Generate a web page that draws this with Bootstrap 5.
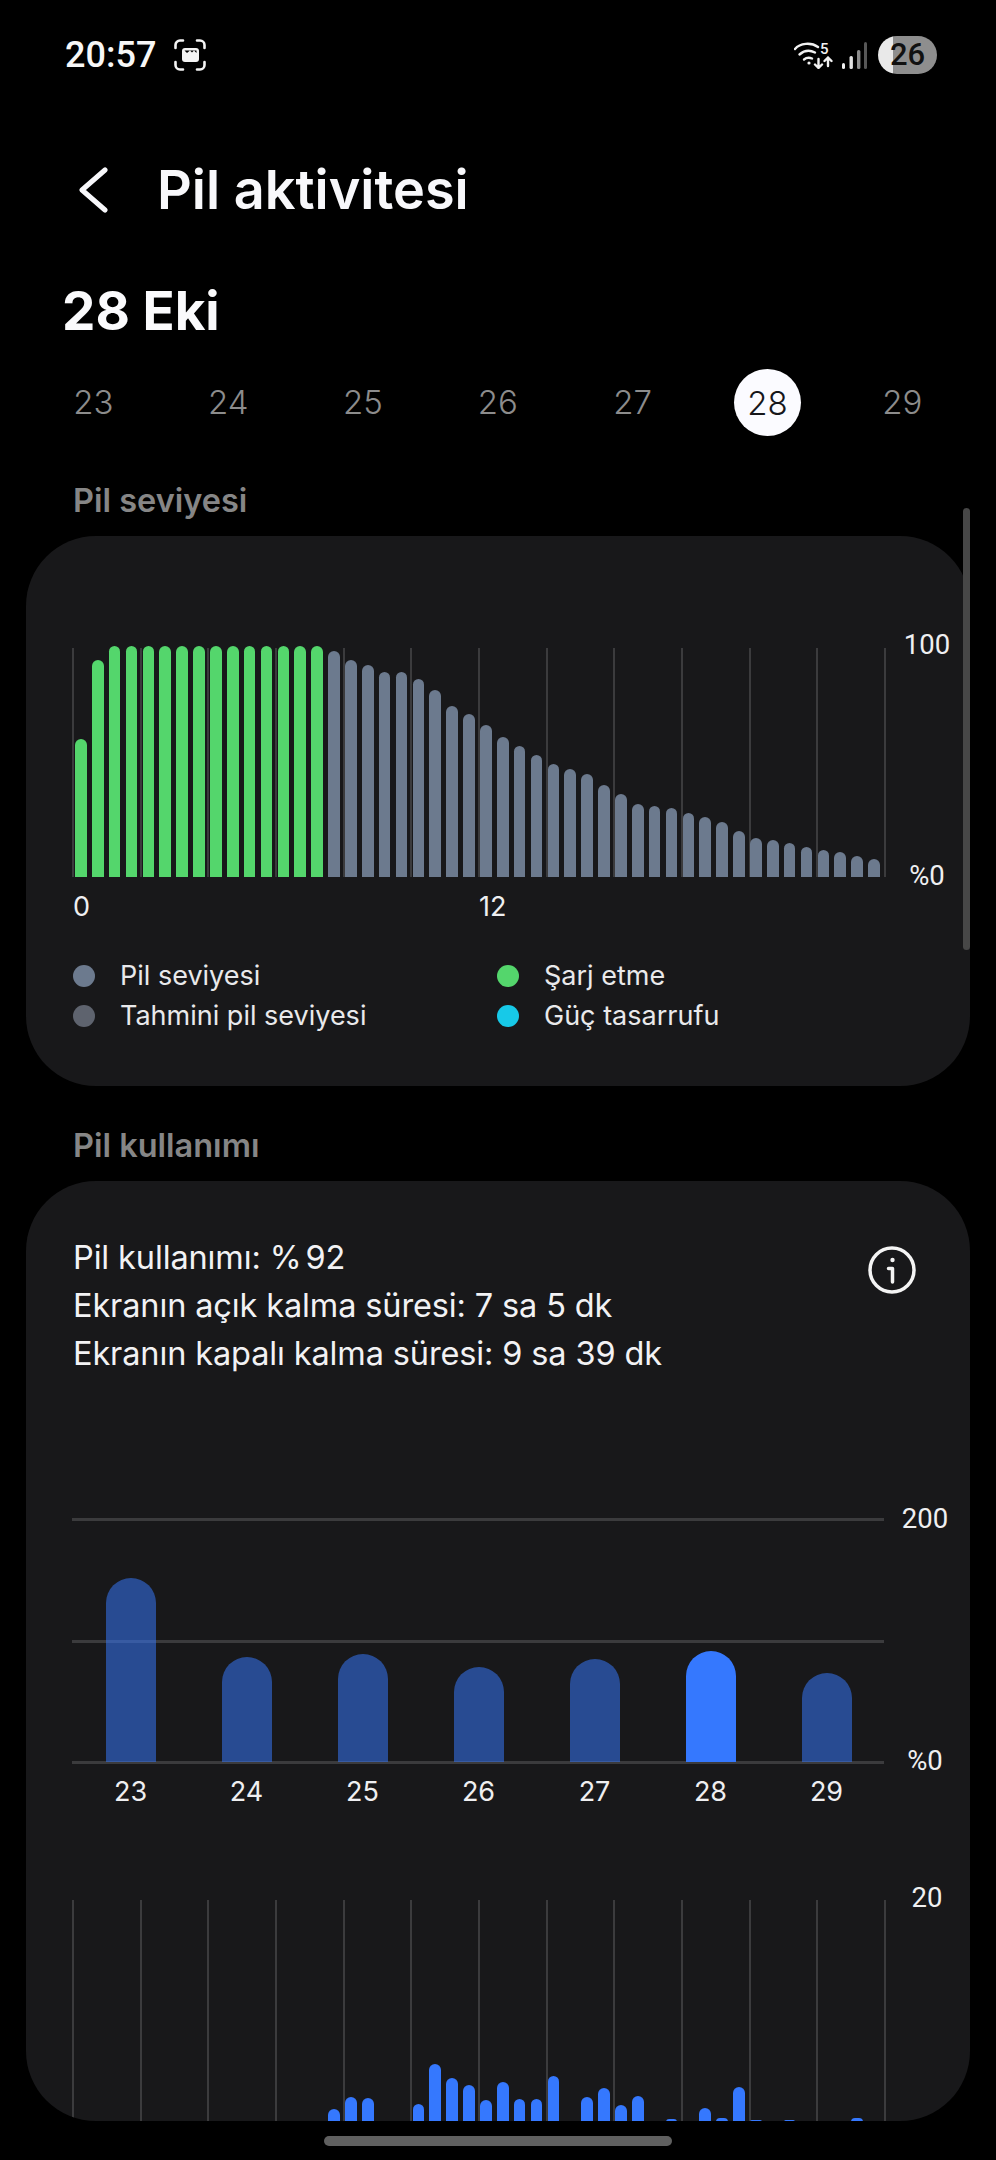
<!DOCTYPE html>
<html lang="tr">

<head>
  <meta charset="utf-8">
  <title>Pil aktivitesi</title>
  <link href="https://cdn.jsdelivr.net/npm/bootstrap@5.3.2/dist/css/bootstrap.min.css" rel="stylesheet" type="text/css" />
  <script src="https://cdn.jsdelivr.net/npm/bootstrap@5.3.2/dist/js/bootstrap.bundle.min.js"></script>
  <style>
    body { background: #000; margin: 0; font-family: "Inter", "Roboto", sans-serif; color: #f2f2f4; }
    .screen { width: 996px; height: 2160px; overflow: hidden; background: #000; }

    .status-row { height: 110px; padding: 0 59px 0 65px; }
    .status-time { font-family: "Roboto", sans-serif; font-size: 36px; font-weight: 500; line-height: 1; color: #f7f7f7; }
    .status-left { gap: 18px; }
    .status-right svg { display: block; }
    .batt-pill { width: 59px; height: 38px; border-radius: 19px; margin-left: 11px; background: linear-gradient(to right, #e9e9e9 0 15px, #8e8e8e 15px); color: #111; font-family: "Roboto", sans-serif; font-size: 31px; font-weight: 500; line-height: 38px; text-align: center; }

    .title-row { height: 160px; padding-left: 78px; }
    .title-text { font-size: 54px; font-weight: 600; line-height: 60px; margin: 0 0 0 47px; color: #f8f8fb; }
    .date-head { height: 80px; line-height: 82px; font-size: 53px; font-weight: 700; padding-left: 62px; margin: 0; color: #fafafc; }

    .day-row { height: 104px; padding-left: 26px; }
    .day-cell { width: 134.8px; font-size: 33px; font-weight: 300; color: #8c8c8c; text-align: center; line-height: 68px; }
    .day-on { width: 67px; height: 67px; border-radius: 50%; background: #fbfbff; color: #16161a; margin: 0 auto; }

    .sect-head { font-size: 32.5px; font-weight: 600; line-height: 40px; color: #868686; padding-left: 73px; margin: 27px 0 15px; }
    .sect-head2 { margin-top: 40px; }

    .panel { margin: 0 26px; background: #18181a; border-radius: 70px; overflow: hidden; }
    .panel-a { height: 550px; padding: 112px 0 0 46px; }
    .panel-b { height: 940px; padding: 53px 0 0 46px; }

    .chart-a { height: 229px; }
    .chart-grid { width: 814px; background: repeating-linear-gradient(to right, #3b3b3d 0 2px, transparent 2px 67.67px); }
    .bars-48 { gap: 5.2px; padding-left: 3px; }
    .bar-a { width: 11.7px; border-radius: 6px 6px 0 0; }
    .tone-green { background: #54d66c; }
    .tone-slate { background: #6c7a8e; }
    .tone-est { background: #5e636e; }
    .tone-save { background: #17c9e8; }

    .axis-col { width: 60px; margin-left: 11px; text-align: center; font-family: "Roboto", sans-serif; font-size: 27.5px; line-height: 32px; color: #efeff1; }
    .axis-a { height: 263px; margin-top: -19px; }
    .axis-b { height: 274px; margin-top: -15px; }
    .axis-c { margin-top: -18px; }

    .hour-row { margin-top: 14px; font-size: 27px; line-height: 32px; color: #efeff1; padding-left: 1px; }
    .hour-row span { width: 406px; }

    .legend-grid { grid-template-columns: 424px 1fr; margin: 33px 0 0 1px; font-size: 27px; line-height: 40px; color: #e9e9eb; }
    .legend-dot { width: 22px; height: 22px; border-radius: 50%; margin-right: 25px; }

    .usage-text { font-size: 32.5px; line-height: 48px; margin-left: 1px; color: #f2f2f4; letter-spacing: -.13px; }
    .usage-pct { margin-right: 4px; }
    .usage-row { padding-right: 54px; height: 144px; }
    .info-icon { margin-top: 12px; }

    .chart-b { height: 246px; width: 812px; background: repeating-linear-gradient(to bottom, #3b3b3d 0 3px, transparent 3px 121.5px); }
    .chart-b-row { margin-top: 140px; height: 246px; }
    .week-cell { width: 116px; padding-left: 1px; }
    .bar-b { width: 50px; margin: 0 auto 2px; border-radius: 25px 25px 0 0; background: rgba(55, 120, 254, .53); }
    .bar-now { background: #3578fe; }
    .week-labels { width: 812px; margin-top: 12px; font-size: 27px; line-height: 32px; color: #efeff1; text-align: center; }

    .chart-c-row { margin-top: 92px; height: 222px; }
    .chart-c { height: 222px; }
    .bar-c { width: 11.7px; border-radius: 6px 6px 0 0; background: #3578fe; }

    .scroll-thumb { left: 963px; top: 508px; width: 7px; height: 442px; border-radius: 4px; background: #474747; }
    .home-pill { left: 324px; top: 2136px; width: 348px; height: 10px; border-radius: 5px; background: #606060; }
  </style>
</head>

<body>
  <div class="screen position-relative d-flex flex-column">
    <div class="status-row d-flex align-items-center justify-content-between">
      <div class="status-left d-flex align-items-center">
        <span class="status-time">20:57</span>
        <svg width="32" height="32" viewBox="0 0 32 32" fill="none" stroke="#f4f4f4" stroke-width="2.6" stroke-linecap="round">
          <path d="M1.5 9V6a4.5 4.5 0 0 1 4.5-4.5h3M23 1.5h3A4.5 4.5 0 0 1 30.5 6v3M30.5 23v3a4.5 4.5 0 0 1-4.5 4.5h-3M9 30.5H6A4.5 4.5 0 0 1 1.500 26v-3" />
          <rect x="8" y="9" width="17" height="14" rx="3" fill="#f4f4f4" stroke="none" />
          <path d="M10.500 11.500l2.500 2.500 3-2.500 2 2 2-2 2.500 2.500v-2.500z" fill="#000" stroke="none" />
        </svg>
      </div>
      <div class="status-right d-flex align-items-center">
        <svg width="40" height="28" viewBox="0 0 40 28" fill="none" stroke="#f2f2f2" stroke-width="2.400" stroke-linecap="round" stroke-linejoin="round">
          <path d="M1 8C6 2 17 1 24 6" />
          <path d="M5.500 13.500C10 9.500 16 9 21 11.500" />
          <path d="M10 18.500C12.500 16.500 15.500 16.500 18 17.500" />
          <circle cx="15" cy="22" r="1.600" fill="#f2f2f2" stroke="none" />
          <path d="M24.500 18V27M21 23.500l3.500 3.500 3.500-3.500M34 25V16.500M30.500 20l3.500-3.500 3.500 3.500" />
          <text x="26" y="12.500" font-family="Roboto, sans-serif" font-size="15" font-weight="500" fill="#f2f2f2" stroke="none">5</text>
        </svg>
        <svg class="ms-2" width="25" height="27" viewBox="0 0 25 27" fill="none">
          <rect x="0" y="21" width="3" height="6" rx="1.500" fill="#f2f2f2" />
          <rect x="7.500" y="14" width="3.400" height="13" rx="1.500" fill="#e2e2e2" />
          <rect x="15" y="8" width="3.400" height="19" rx="1.500" fill="#8d8d8d" />
          <rect x="22" y="0" width="3" height="27" rx="1.500" fill="#575757" />
        </svg>
        <div class="batt-pill">26</div>
      </div>
    </div>

    <div class="title-row d-flex align-items-center">
      <svg width="32" height="46" viewBox="0 0 32 46" fill="none" stroke="#f8f8fb" stroke-width="5" stroke-linecap="round" stroke-linejoin="round">
        <path d="M27 3L4 23l23 20" />
      </svg>
      <h1 class="title-text">Pil aktivitesi</h1>
    </div>

    <h2 class="date-head">28 Eki</h2>

    <div class="day-row d-flex align-items-center">
      <div class="day-cell">23</div>
      <div class="day-cell">24</div>
      <div class="day-cell">25</div>
      <div class="day-cell">26</div>
      <div class="day-cell">27</div>
      <div class="day-cell"><div class="day-on">28</div></div>
      <div class="day-cell">29</div>
    </div>

    <div class="sect-head">Pil seviyesi</div>
    <div class="panel panel-a">
      <div class="d-flex chart-a">
        <div class="chart-grid d-flex align-items-end bars-48" id="levelBars"></div>
        <div class="axis-col axis-a d-flex flex-column justify-content-between">
          <span>100</span>
          <span>%0</span>
        </div>
      </div>
      <div class="hour-row d-flex">
        <span>0</span>
        <span>12</span>
      </div>
      <div class="legend-grid d-grid">
        <div class="d-flex align-items-center"><span class="legend-dot tone-slate"></span>Pil seviyesi</div>
        <div class="d-flex align-items-center"><span class="legend-dot tone-green"></span>Şarj etme</div>
        <div class="d-flex align-items-center"><span class="legend-dot tone-est"></span>Tahmini pil seviyesi</div>
        <div class="d-flex align-items-center"><span class="legend-dot tone-save"></span>Güç tasarrufu</div>
      </div>
    </div>

    <div class="sect-head sect-head2">Pil kullanımı</div>
    <div class="panel panel-b">
      <div class="usage-row d-flex justify-content-between align-items-start">
        <div class="usage-text">
          <div>Pil kullanımı: <span class="usage-pct">%</span>92</div>
          <div>Ekranın açık kalma süresi: 7 sa 5 dk</div>
          <div>Ekranın kapalı kalma süresi: 9 sa 39 dk</div>
        </div>
        <svg class="info-icon" width="48" height="48" viewBox="0 0 48 48" fill="none" stroke="#f4f4f4" stroke-width="3.500" stroke-linecap="round" stroke-linejoin="round">
          <circle cx="24" cy="24" r="22" />
          <path d="M20.500 22.500H24.500V36" />
          <circle cx="24.500" cy="14" r="2.200" fill="#f4f4f4" stroke="none" />
        </svg>
      </div>

      <div class="d-flex chart-b-row">
        <div class="chart-b d-flex align-items-end" id="weekBars"></div>
        <div class="axis-col axis-b d-flex flex-column justify-content-between">
          <span>200</span>
          <span>%0</span>
        </div>
      </div>
      <div class="week-labels d-flex" id="weekLabels"></div>

      <div class="d-flex chart-c-row">
        <div class="chart-grid chart-c d-flex align-items-end bars-48" id="hourBars"></div>
        <div class="axis-col axis-c"><span>20</span></div>
      </div>
    </div>

    <div class="scroll-thumb position-absolute"></div>
    <div class="home-pill position-absolute"></div>
  </div>

  <script>
    // bar heights in px, read off the screenshot
    const levelHeights = [138, 217, 231, 231, 231, 231, 231, 231, 231, 231, 231, 231, 231, 231, 231,
      226, 217, 212, 205, 205, 198, 187, 171, 163, 152, 140,
      131, 122, 113, 108, 103, 92, 83, 73, 71, 69, 64, 60, 55, 46, 39, 37, 34, 30, 27, 25, 21, 18]
    const levelBars = document.querySelector("#levelBars")
    for (let i = 0; i < levelHeights.length; i++) {
      const bar = document.createElement("div")
      bar.className = "bar-a " + (i < 15 ? "tone-green" : "tone-slate")
      bar.style.height = levelHeights[i] + "px"
      levelBars.appendChild(bar)
    }

    const weekData = [
      { day: 23, height: 184 },
      { day: 24, height: 105 },
      { day: 25, height: 108 },
      { day: 26, height: 95 },
      { day: 27, height: 103 },
      { day: 28, height: 111, now: true },
      { day: 29, height: 89 }
    ]
    const weekBars = document.querySelector("#weekBars")
    const weekLabels = document.querySelector("#weekLabels")
    for (let i = 0; i < weekData.length; i++) {
      const cell = document.createElement("div")
      cell.className = "week-cell"
      const bar = document.createElement("div")
      bar.className = weekData[i].now ? "bar-b bar-now" : "bar-b"
      bar.style.height = weekData[i].height + "px"
      cell.appendChild(bar)
      weekBars.appendChild(cell)

      const label = document.createElement("div")
      label.className = "week-cell"
      label.textContent = weekData[i].day
      weekLabels.appendChild(label)
    }

    // slot number -> height above the panel's bottom edge
    const hourHeights = { 15: 13, 16: 25, 17: 24, 20: 18, 21: 58, 22: 44, 23: 37, 24: 22, 25: 40, 26: 23, 27: 23, 28: 46, 30: 25, 31: 34, 32: 17, 33: 26, 35: 3, 37: 14, 38: 4, 39: 35, 40: 2, 42: 2, 46: 4 }
    const hourBars = document.querySelector("#hourBars")
    for (let i = 0; i < 48; i++) {
      const bar = document.createElement("div")
      bar.className = "bar-c"
      bar.style.height = (hourHeights[i] || 0) + "px"
      hourBars.appendChild(bar)
    }
  </script>
</body>

</html>
